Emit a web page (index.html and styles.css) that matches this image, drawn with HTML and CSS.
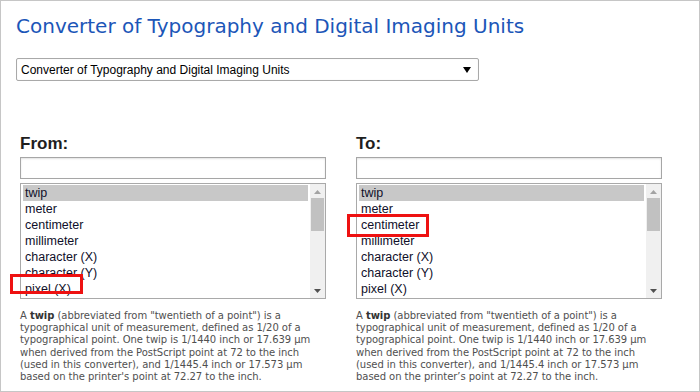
FILE: index.html
```html
<!DOCTYPE html>
<html lang="en">
<head>
  <meta charset="UTF-8">
  <title>Converter of Typography and Digital Imaging Units</title>
  <link rel="stylesheet" href="styles.css">
</head>
<body>
  <div class="page">
    <h1 class="title">Converter of Typography and Digital Imaging Units</h1>

    <div class="picker">
      <span>Converter of Typography and Digital Imaging Units</span>
      <svg class="picker-arrow" width="8" height="6" viewBox="0 0 8 6"><path d="M0 0h8L4 6z" fill="#000"/></svg>
    </div>

    <div class="columns">
      <!-- From column -->
      <div class="unit-col">
        <div class="unit-label">From:</div>
        <input class="unit-search" type="text">
        <div class="listbox">
          <ul class="options">
            <li class="selected">twip</li>
            <li>meter</li>
            <li>centimeter</li>
            <li>millimeter</li>
            <li>character (X)</li>
            <li>character (Y)</li>
            <li>pixel (X)</li>
            <li>pixel (Y)</li>
          </ul>
          <div class="scrollbar">
            <svg width="7" height="4" viewBox="0 0 7 4"><path d="M0 4h7L3.5 0z" fill="#a3a3a3"/></svg>
            <div class="thumb"></div>
            <div class="track"></div>
            <svg width="7" height="4" viewBox="0 0 7 4"><path d="M0 0h7L3.5 4z" fill="#505050"/></svg>
          </div>
          <div class="mark mark-from"></div>
        </div>
        <p class="desc">A <b>twip</b> (abbreviated from "twentieth of a point") is a typographical unit of measurement, defined as 1/20 of a typographical point. One twip is 1/1440 inch or 17.639 µm when derived from the PostScript point at 72 to the inch (used in this converter), and 1/1445.4 inch or 17.573 µm based on the printer's point at 72.27 to the inch.</p>
      </div>

      <!-- To column -->
      <div class="unit-col">
        <div class="unit-label">To:</div>
        <input class="unit-search" type="text">
        <div class="listbox">
          <ul class="options">
            <li class="selected">twip</li>
            <li>meter</li>
            <li>centimeter</li>
            <li>millimeter</li>
            <li>character (X)</li>
            <li>character (Y)</li>
            <li>pixel (X)</li>
            <li>pixel (Y)</li>
          </ul>
          <div class="scrollbar">
            <svg width="7" height="4" viewBox="0 0 7 4"><path d="M0 4h7L3.5 0z" fill="#a3a3a3"/></svg>
            <div class="thumb"></div>
            <div class="track"></div>
            <svg width="7" height="4" viewBox="0 0 7 4"><path d="M0 0h7L3.5 4z" fill="#505050"/></svg>
          </div>
          <div class="mark mark-to"></div>
        </div>
        <p class="desc">A <b>twip</b> (abbreviated from "twentieth of a point") is a typographical unit of measurement, defined as 1/20 of a typographical point. One twip is 1/1440 inch or 17.639 µm when derived from the PostScript point at 72 to the inch (used in this converter), and 1/1445.4 inch or 17.573 µm based on the printer’s point at 72.27 to the inch.</p>
      </div>
    </div>
  </div>
</body>
</html>
```

FILE: styles.css
```css
* {
  margin: 0;
  padding: 0;
  box-sizing: border-box;
}

body {
  background-color: #fff;
  font-family: "Liberation Sans", Arial, sans-serif;
}

.page {
  width: 700px;
  height: 392px;
  border: 1px solid #c6c6c6;
  padding: 13px 0 0 15px;
  overflow: hidden;
}

.title {
  font-family: "DejaVu Sans", Verdana, sans-serif;
  font-weight: normal;
  font-size: 20px;
  line-height: 24px;
  color: #1c56b8;
}

.picker {
  margin-top: 20px;
  width: 463px;
  height: 23px;
  border: 1px solid #a9a9a9;
  border-radius: 2px;
  box-shadow: inset 0 0 1px #ddd;
  display: flex;
  align-items: center;
  justify-content: space-between;
  padding: 0 7px 0 4px;
  font-size: 12px;
  color: #000;
}

.columns {
  display: flex;
  gap: 30px;
  margin-top: 53px;
  padding-left: 4px;
}

.unit-col {
  width: 306px;
  position: relative;
}

.unit-label {
  font-weight: bold;
  font-size: 17px;
  line-height: 20px;
  color: #1e1e1e;
}

.unit-search {
  display: block;
  margin-top: 3px;
  width: 306px;
  height: 22px;
  border: 1px solid #a6a6a6;
  box-shadow: inset 0 1px 2px #e2e2e2;
  outline: none;
}

.listbox {
  position: relative;
  margin-top: 4px;
  height: 116px;
  border: 1px solid #a9a9a9;
  display: flex;
  padding: 1px 0 1px 2px;
}

.options {
  list-style: none;
  flex: 1;
  overflow: hidden;
  font-size: 12.5px;
  color: #10102a;
}

.options li {
  height: 16px;
  line-height: 16px;
  padding-left: 2px;
}

.options li.selected {
  background-color: #c8c8c8;
}

.scrollbar {
  width: 15px;
  margin: -1px 0 -1px 2px;
  background-color: #f0f0f0;
  display: flex;
  flex-direction: column;
  align-items: center;
  padding: 6px 0 5px;
}

.thumb {
  width: 13px;
  height: 33px;
  margin-top: 4px;
  background-color: #c1c1c1;
}

.track {
  flex: 1;
}

.mark {
  position: absolute;
  border: 3px solid #ee1111;
}

.mark-from {
  left: -11px;
  top: 90px;
  width: 73px;
  height: 20px;
}

.mark-to {
  left: -10px;
  top: 30px;
  width: 82px;
  height: 23px;
}

.desc {
  margin-top: 11px;
  font-family: "DejaVu Sans", Verdana, sans-serif;
  font-size: 10px;
  line-height: 12.2px;
  letter-spacing: -0.05px;
  color: #505050;
}

.desc b {
  color: #333;
}
```
